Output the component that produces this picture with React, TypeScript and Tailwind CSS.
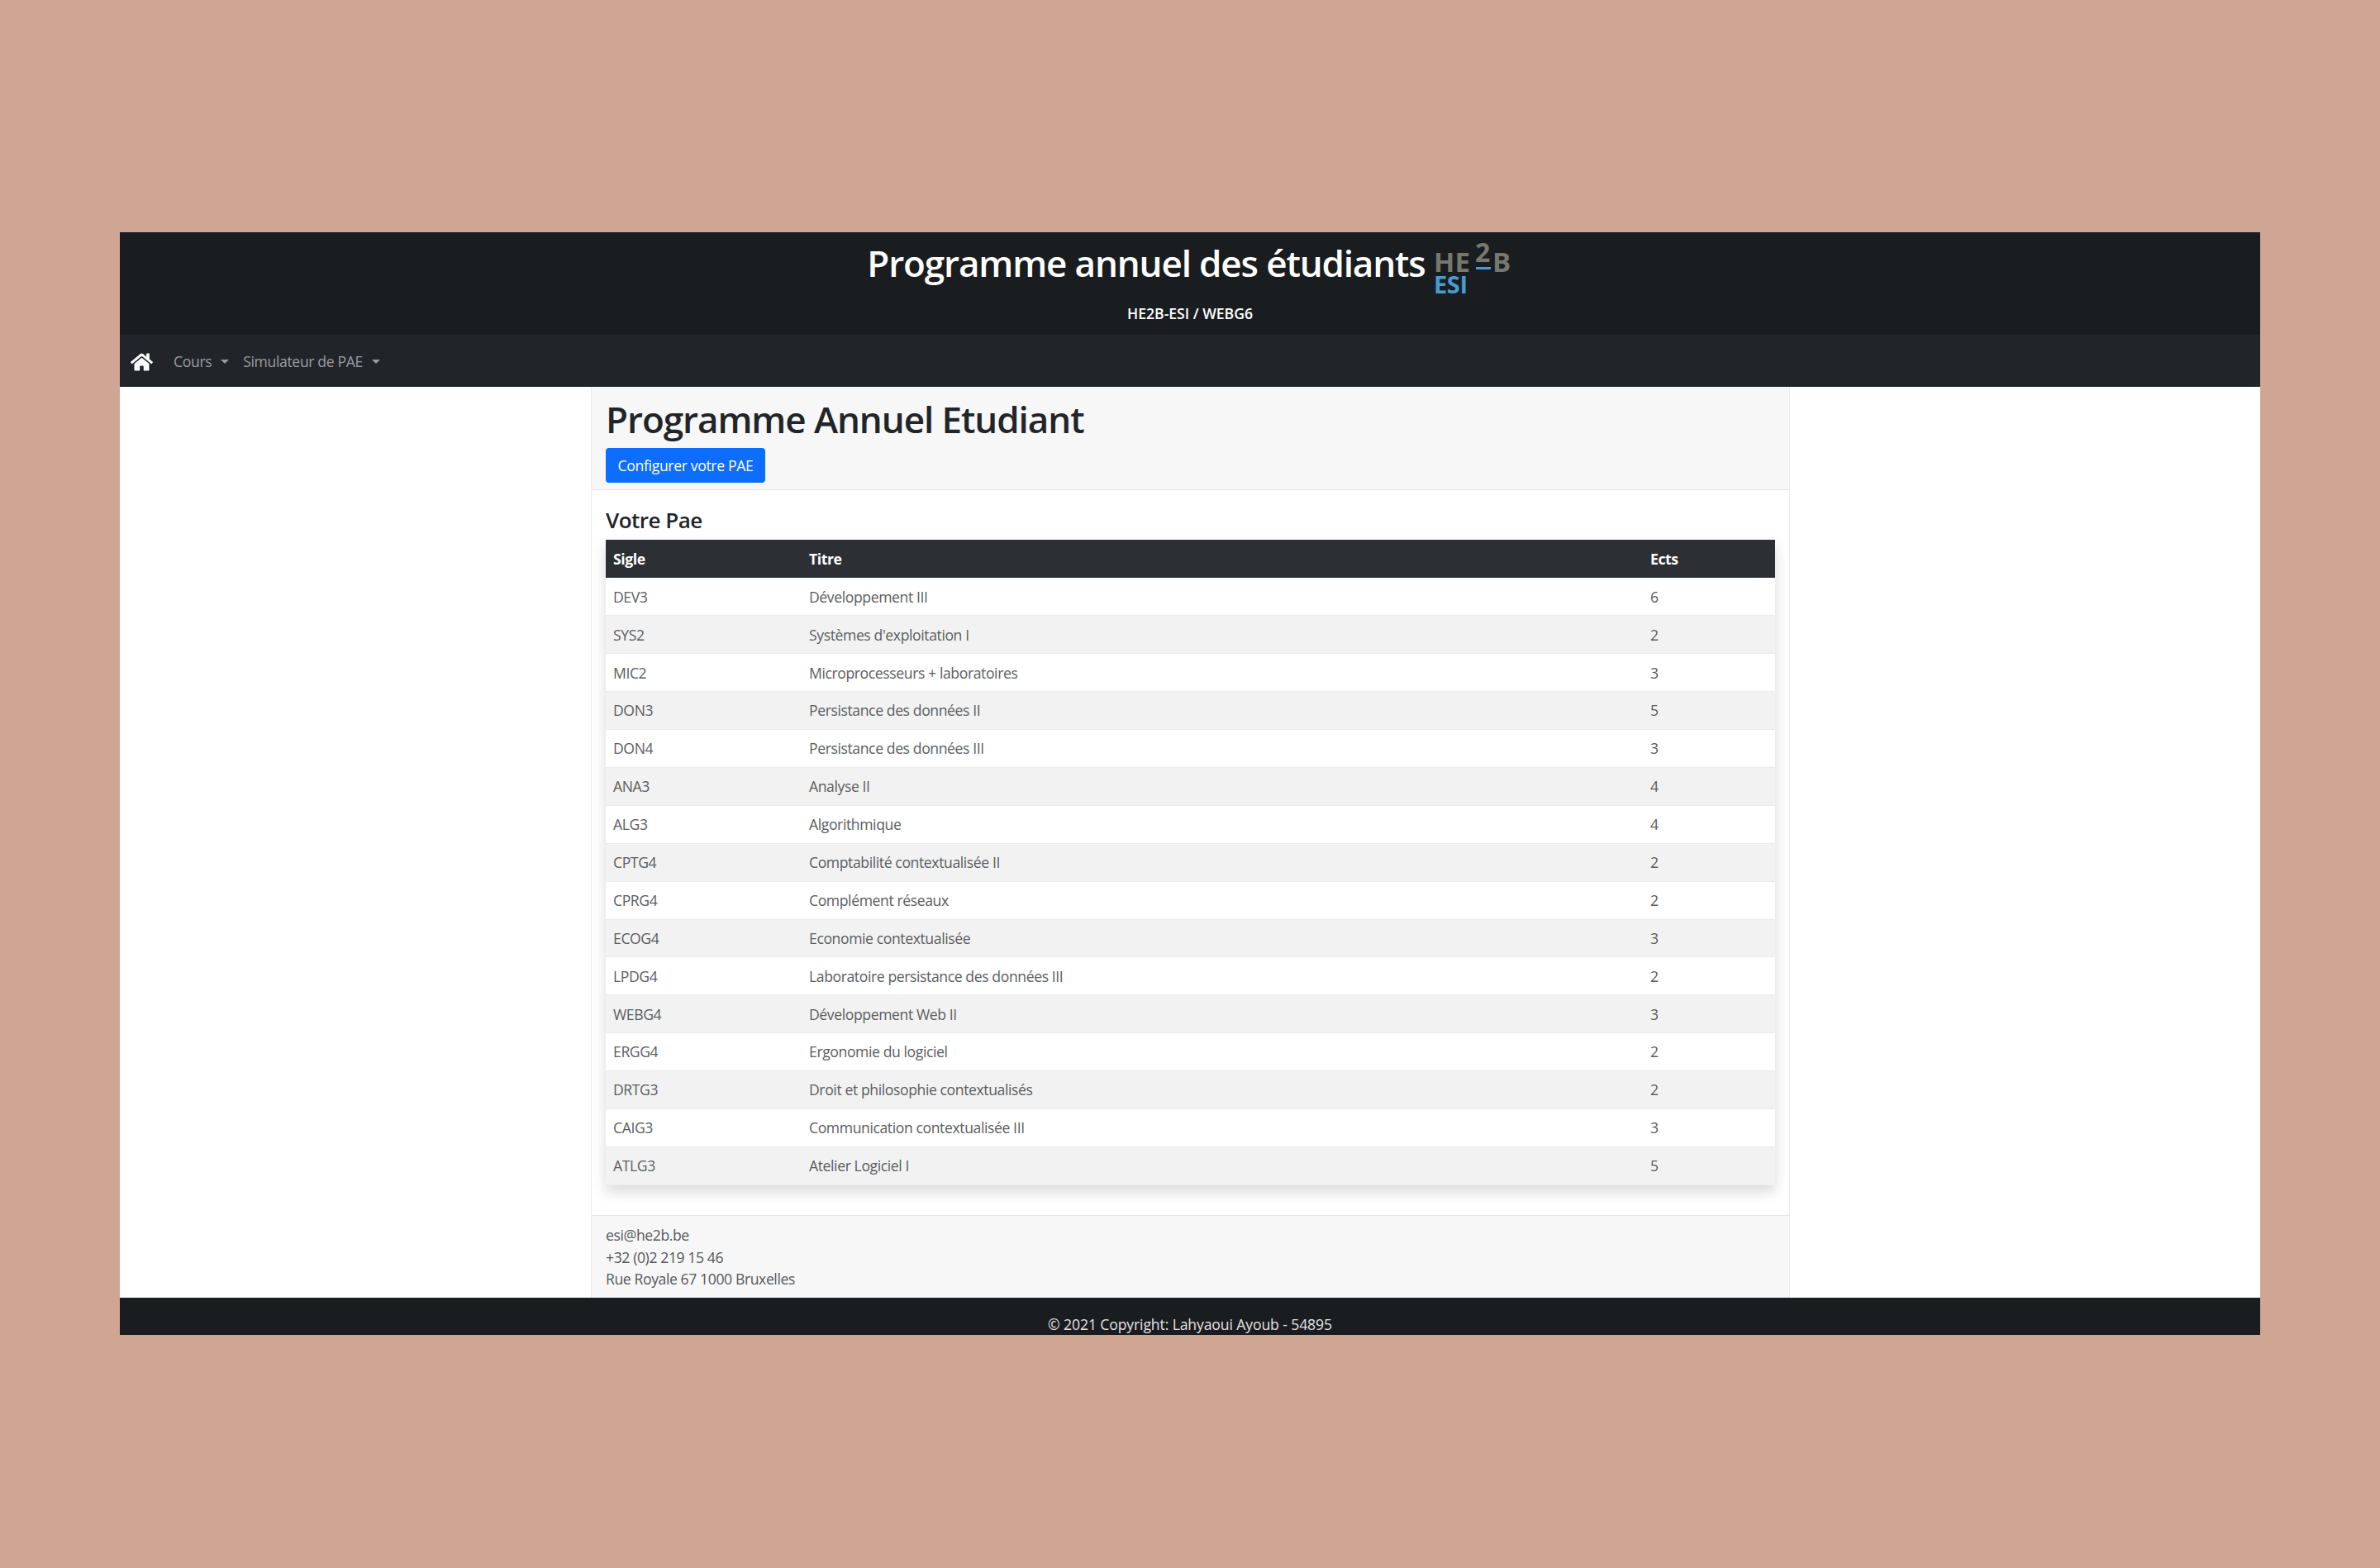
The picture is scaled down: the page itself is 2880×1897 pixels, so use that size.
import { FaHome } from "react-icons/fa";

const rows: [string, string, number][] = [
  ["DEV3", "Développement III", 6],
  ["SYS2", "Systèmes d'exploitation I", 2],
  ["MIC2", "Microprocesseurs + laboratoires", 3],
  ["DON3", "Persistance des données II", 5],
  ["DON4", "Persistance des données III", 3],
  ["ANA3", "Analyse II", 4],
  ["ALG3", "Algorithmique", 4],
  ["CPTG4", "Comptabilité contextualisée II", 2],
  ["CPRG4", "Complément réseaux", 2],
  ["ECOG4", "Economie contextualisée", 3],
  ["LPDG4", "Laboratoire persistance des données III", 2],
  ["WEBG4", "Développement Web II", 3],
  ["ERGG4", "Ergonomie du logiciel", 2],
  ["DRTG3", "Droit et philosophie contextualisés", 2],
  ["CAIG3", "Communication contextualisée III", 3],
  ["ATLG3", "Atelier Logiciel I", 5],
];

function Logo() {
  return (
    <svg width="96" height="86" viewBox="0 0 96 86" className="block self-start">
      <g fontFamily="'Open Sans', sans-serif" fontWeight="700">
        <text x="0" y="48" fontSize="33" fill="#77776d" letterSpacing="0.3">HE</text>
        <text x="50" y="36" fontSize="32" fill="#77776d">2</text>
        <rect x="51" y="42" width="18" height="3" fill="#4a9bd0" />
        <text x="71" y="48" fontSize="33" fill="#77776d">B</text>
        <text x="0" y="74" fontSize="29" fill="#4a9bd0" letterSpacing="-0.4">ESI</text>
      </g>
    </svg>
  );
}

function Caret() {
  return <span className="ml-[11px] inline-block h-0 w-0 border-x-[5px] border-t-[5px] border-x-transparent border-t-[#9a9da0] align-middle" />;
}

export default function App() {
  return (
    <div className="min-h-[1897px] bg-[#cfa594] px-[145px] pt-[281px] font-['Open_Sans',sans-serif]">
      <div className="flex w-[2590px] flex-col">
        <header className="flex h-[124px] flex-col items-center bg-[#1a1d20] text-white">
          <div className="flex h-[74px] items-center gap-[10px]">
            <h1 className="text-[44px] leading-none font-semibold tracking-[-1.13px] whitespace-nowrap">Programme annuel des étudiants</h1>
            <Logo />
          </div>
          <p className="mt-[12px] text-[17.6px] leading-6 font-semibold tracking-[0px]">HE2B-ESI / WEBG6</p>
        </header>
        <nav className="flex h-[63px] items-center bg-[#212529] pt-[2px] pl-[13px] text-[17.6px] tracking-[-0.36px] text-[#9a9da0]">
          <FaHome className="h-[24px] w-[27px] text-white" />
          <span className="ml-[25px] flex items-center">Cours<Caret /></span>
          <span className="ml-[17px] flex items-center">Simulateur de PAE<Caret /></span>
        </nav>
        <main className="flex h-[1102px] justify-center bg-white pl-[1px]">
          <div className="flex w-[1451px] flex-col border-x border-[#ececec] text-[#212529]">
            <div className="h-[125px] border-b border-[#e6e6e6] bg-[#f7f7f7] px-[17px]">
              <h2 className="mt-[13px] text-[44px] leading-[52px] font-semibold tracking-[-1.06px]">Programme Annuel Etudiant</h2>
              <button className="mt-[9px] h-[42px] w-[193px] rounded-[4px] bg-[#0d6efd] text-[17.6px] tracking-[-0.35px] text-white">Configurer votre PAE</button>
            </div>
            <div className="flex-1 bg-white px-[17px]">
              <h3 className="mt-[19px] mb-[7px] text-[26px] leading-[34px] font-semibold tracking-[-0.5px]">Votre Pae</h3>
              <table className="w-[1415px] table-fixed border-collapse text-[17.6px] tracking-[-0.4px] shadow-[0_8px_16px_rgba(0,0,0,0.15)]">
                <colgroup>
                  <col className="w-[237px]" />
                  <col className="w-[1018px]" />
                  <col className="w-[160px]" />
                </colgroup>
                <thead>
                  <tr className="h-[46px] bg-[#2c3034] text-left text-white">
                    <th className="px-[9px] font-bold">Sigle</th>
                    <th className="px-[9px] font-bold">Titre</th>
                    <th className="px-[9px] font-bold">Ects</th>
                  </tr>
                </thead>
                <tbody className="text-[#5a5d60]">
                  {rows.map(([sigle, titre, ects], i) => (
                    <tr key={sigle} className={`h-[45.9px] border-b border-[#ececec] ${i % 2 ? "bg-[#f2f2f2]" : "bg-white"}`}>
                      <td className="px-[9px]">{sigle}</td>
                      <td className="px-[9px]">{titre}</td>
                      <td className="px-[9px]">{ects}</td>
                    </tr>
                  ))}
                </tbody>
              </table>
            </div>
            <div className="h-[100px] border-t border-[#e6e6e6] bg-[#f7f7f7] px-[17px] pt-[10px] text-[17.6px] leading-[26.5px] tracking-[-0.4px] text-[#55585b]">
              <p>esi@he2b.be</p>
              <p>+32 (0)2 219 15 46</p>
              <p>Rue Royale 67 1000 Bruxelles</p>
            </div>
          </div>
        </main>
        <footer className="flex h-[45px] justify-center bg-[#1a1d20] pt-[19px] text-[17.6px] leading-[26px] tracking-[-0.12px] text-[#e2e2e2]">
          <span className="h-[26px] overflow-hidden">© 2021 Copyright: Lahyaoui Ayoub - 54895</span>
        </footer>
      </div>
    </div>
  );
}
